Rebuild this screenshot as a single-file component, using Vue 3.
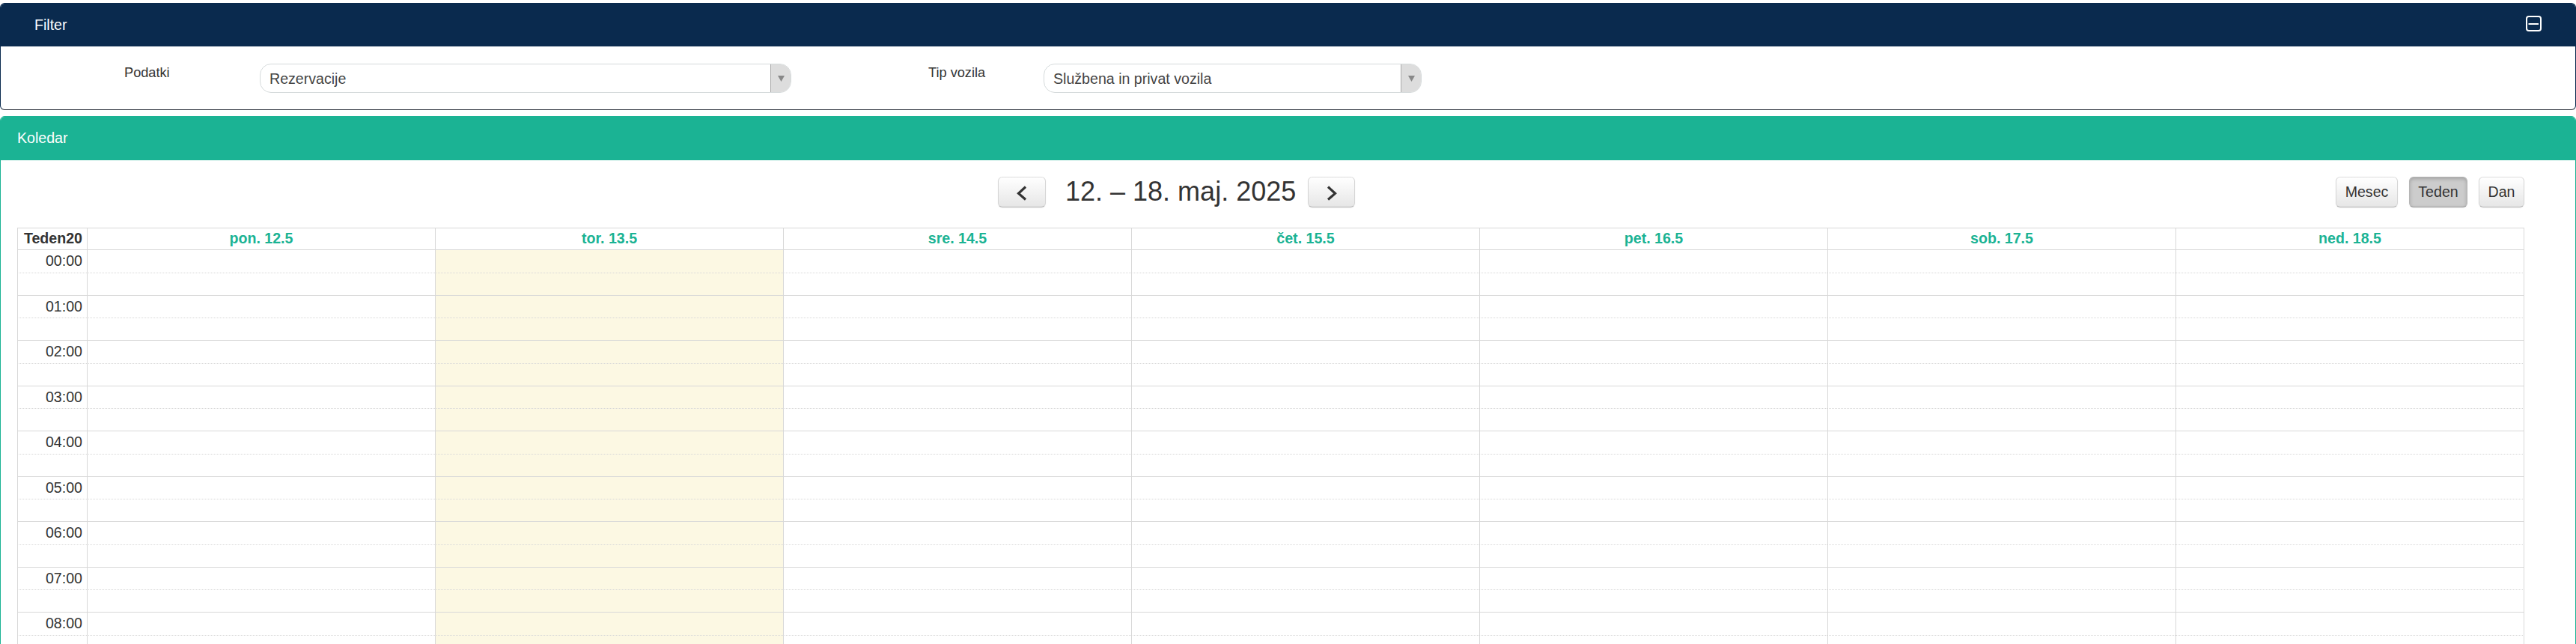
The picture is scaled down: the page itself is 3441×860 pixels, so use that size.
<template>
  <div class="page">
    <section class="panel panel-filter">
      <header class="panel-heading">
        <span>Filter</span>
        <svg class="collapse-icon" viewBox="0 0 21 21" width="21" height="21">
          <rect x="1" y="1" width="19" height="19" rx="3" fill="none" stroke="#fff" stroke-width="2" />
          <path d="M3.5 11h13.5" stroke="#fff" stroke-width="2" />
        </svg>
      </header>
      <div class="filter-body">
        <div v-for="filter in filters" :key="filter.name" class="filter-group" :class="filter.name">
          <label class="filter-label">{{ filter.label }}</label>
          <div class="select">
            <span class="select-value">{{ filter.value }}</span>
            <span class="select-arrow">
              <svg viewBox="0 0 9 8" width="9" height="8"><path d="M0 0h9L4.5 8z" fill="#888" /></svg>
            </span>
          </div>
        </div>
      </div>
    </section>

    <section class="panel panel-calendar">
      <header class="panel-heading"><span>Koledar</span></header>
      <div class="calendar">
        <div class="toolbar">
          <div class="toolbar-center">
            <button class="btn btn-prev">
              <svg viewBox="0 0 14 20" width="14" height="20"><path d="M12 1.5L2.5 10.3L12 18.5" /></svg>
            </button>
            <h2>12. – 18. maj. 2025</h2>
            <button class="btn btn-next">
              <svg viewBox="0 0 14 20" width="14" height="20"><path d="M2 1.5L11.5 10.3L2 18.5" /></svg>
            </button>
          </div>
          <div class="toolbar-right">
            <button
              v-for="view in views"
              :key="view"
              class="btn"
              :class="[view.toLowerCase(), { active: view === activeView }]"
            >{{ view }}</button>
          </div>
        </div>

        <div class="grid">
          <div class="row head">
            <div class="cell axis">Teden20</div>
            <div v-for="day in days" :key="day" class="cell day-name">{{ day }}</div>
          </div>
          <div v-for="slot in slots" :key="slot.id" class="row slot" :class="{ minor: slot.minor }">
            <div class="cell axis">{{ slot.label }}</div>
            <div v-for="day in days" :key="day" class="cell" :class="{ today: day === today }"></div>
          </div>
        </div>
      </div>
    </section>
  </div>
</template>

<script setup>
import { ref } from 'vue'

const filters = [
  { name: 'data', label: 'Podatki', value: 'Rezervacije' },
  { name: 'vehicle', label: 'Tip vozila', value: 'Službena in privat vozila' }
]

const views = ['Mesec', 'Teden', 'Dan']
const activeView = ref('Teden')

const days = ['pon. 12.5', 'tor. 13.5', 'sre. 14.5', 'čet. 15.5', 'pet. 16.5', 'sob. 17.5', 'ned. 18.5']
const today = 'tor. 13.5'

// two half-hour slots per hour, only the full hour is labelled
const slots = Array.from({ length: 18 }, (_, i) => ({
  id: i,
  minor: i % 2 === 1,
  label: i % 2 === 0 ? String(i / 2).padStart(2, '0') + ':00' : ''
}))
</script>

<style>
body { background: #fff; }
</style>

<style scoped>
.page { box-sizing: border-box; height: 860px; padding-top: 4px; overflow: hidden; background: #fff; color: #333; font-family: "Liberation Sans", Arial, sans-serif; font-size: 19.6px; line-height: 28px; }
.page * { box-sizing: border-box; }
.panel { border: 1px solid; border-radius: 6px; overflow: hidden; }
.panel-heading { display: flex; align-items: center; justify-content: space-between; color: #fff; }

.panel-filter { height: 143px; margin-bottom: 8px; border-color: #0a2a4e; border-bottom-color: #2a2f3a; }
.panel-filter .panel-heading { height: 57px; padding: 0 45px 0 45px; background: #0a2a4e; }
.panel-filter .panel-heading span { margin-top: -1px; }
.collapse-icon { margin-top: -4px; }
.filter-body { display: flex; padding-top: 23px; }
.filter-group { display: flex; align-items: flex-start; }
.filter-group.data { padding-left: 165px; }
.filter-group.vehicle { padding-left: 183px; }
.filter-label { width: 181px; font-size: 18.2px; line-height: 24px; }
.vehicle .filter-label { width: 154px; }
.select { display: flex; width: 710px; height: 39px; border: 1px solid #d5dadb; border-radius: 15px; overflow: hidden; color: #444; }
.vehicle .select { width: 505px; }
.select-value { flex: 1; padding-left: 12px; line-height: 38px; }
.select-arrow { display: flex; width: 28px; margin: -1px -1px -1px 0; padding-right: 1px; align-items: center; justify-content: center; border-left: 1px solid #aaa; background: #ddd; }

/* runs past the bottom of the window */
.panel-calendar { height: 760px; border-color: #1bb394; }
.panel-calendar .panel-heading { height: 58px; padding: 0 22px 2px; background: #1bb394; }
.calendar { padding: 22px 68px 0 22px; }
.toolbar { display: flex; height: 68.33px; align-items: flex-start; }
.toolbar-center { display: flex; flex: 1; justify-content: center; }
.toolbar-center h2 { width: 350px; margin: 0; padding-left: 26px; font-size: 36px; font-weight: 400; line-height: 39px; white-space: nowrap; }
.toolbar-right { display: flex; gap: 15px; }
.btn { display: flex; height: 41px; padding: 0 0 1px; align-items: center; justify-content: center; border: 1px solid; border-color: #dcdcdc #d5d5d5 #b3b3b3; border-radius: 6px; background: linear-gradient(#fff, #e6e6e6); box-shadow: inset 0 1px 0 rgba(255, 255, 255, 0.2), 0 1px 2px rgba(0, 0, 0, 0.05); color: #333; font-family: inherit; font-size: 19.6px; line-height: 28px; }
.btn-prev { width: 64px; }
.btn-next { width: 63px; }
.btn svg { margin-top: 3px; fill: none; stroke: #333; stroke-width: 3.2; }
.mesec { width: 83px; }
.teden { width: 78px; }
.dan { width: 61px; }
.btn.active { border-color: #b0b0b0 #b5b5b5 #999; background: #ccc; box-shadow: inset 0 2px 5px rgba(0, 0, 0, 0.2), 0 1px 2px rgba(0, 0, 0, 0.05); }

.row { display: grid; grid-template-columns: 93px repeat(6, 465px) 466px; height: 30.25px; }
.row.head { height: 29px; font-weight: 700; line-height: 26px; }
.cell { border-top: 1px solid #d8d8d8; border-left: 1px solid #d8d8d8; }
.cell:last-child { border-right: 1px solid #d8d8d8; }
.minor .cell { border-top-style: dotted; }
.axis { padding-right: 6px; text-align: right; }
.day-name { color: #1bb394; text-align: center; }
.today { background: #fcf8e3; }
</style>
